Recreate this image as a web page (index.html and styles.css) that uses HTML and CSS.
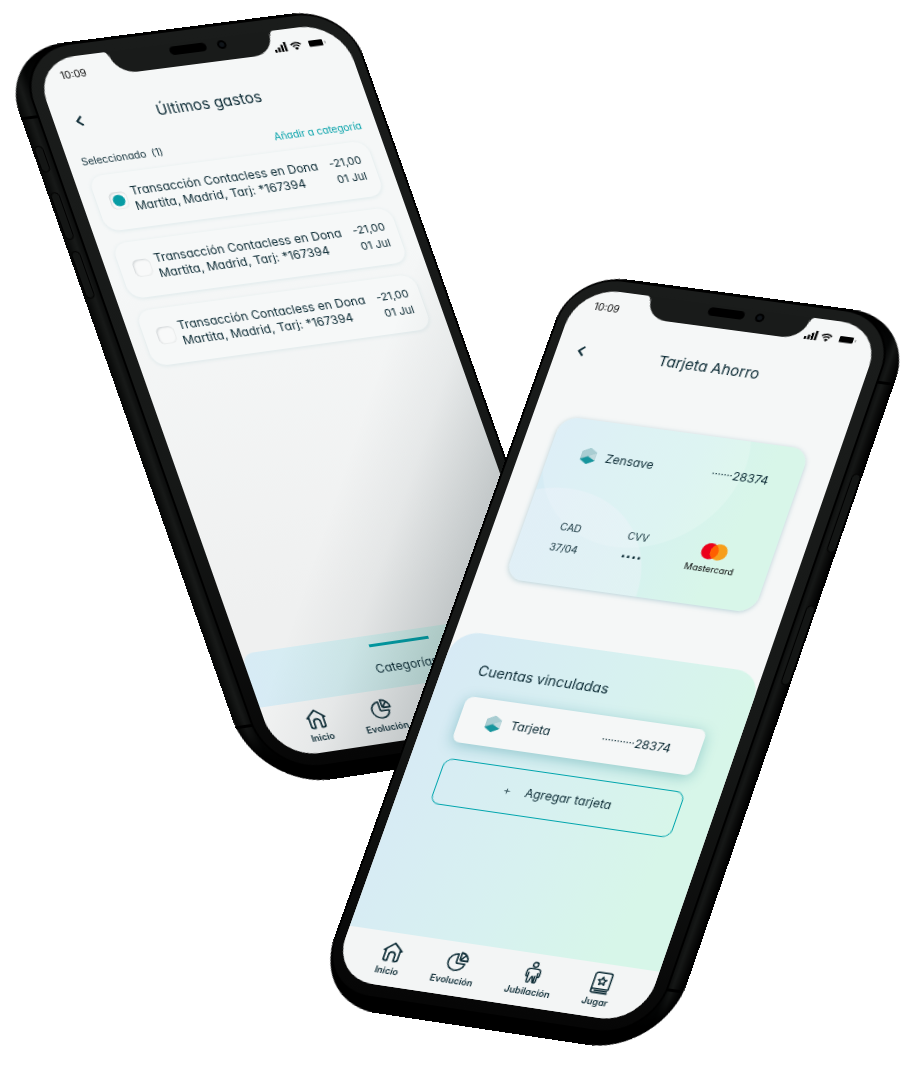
FILE: index.html
```html
<!DOCTYPE html>
<html lang="es">
<head>
<meta charset="utf-8">
<meta name="viewport" content="width=device-width, initial-scale=1">
<title>Zensave</title>
<link rel="stylesheet" href="styles.css">
</head>
<body>
<svg class="sprite" aria-hidden="true">
  <symbol id="i-signal" viewBox="0 0 13 10"><rect x="0" y="7" width="2.2" height="3"/><rect x="3.400" y="5" width="2.2" height="5"/><rect x="6.800" y="2.6" width="2.2" height="7.4"/><rect x="10.200" y="0" width="2.2" height="10"/></symbol>
  <symbol id="i-wifi" viewBox="0 0 12 9"><path d="M.9 3.2a7.4 7.4 0 0 1 10.2 0M2.8 5.3a4.7 4.7 0 0 1 6.4 0" fill="none" stroke="currentColor" stroke-width="1.5"/><path d="M6 9 4 7a2.8 2.8 0 0 1 4 0z"/></symbol>
  <symbol id="i-battery" viewBox="0 0 18 7"><rect width="14" height="6.6" rx="1"/><path d="M16.2 2.2v2.4" stroke="currentColor" stroke-width=".5"/></symbol>
  <symbol id="i-back" viewBox="0 0 10 12"><path d="M7.600 1.200 2.600 6l5 4.800" fill="none" stroke="currentColor" stroke-width="1.900" stroke-linejoin="round"/></symbol>
  <symbol id="i-home" viewBox="0 0 24 24"><path d="M2.500 10.500 12 2.200l9.500 8.300M4.300 9.500V20a2 2 0 0 0 2 2h2.200v-6.300a3.500 3.500 0 0 1 7 0V22h2.200a2 2 0 0 0 2-2V9.500" fill="none" stroke="currentColor" stroke-width="1.800" stroke-linecap="round" stroke-linejoin="round"/></symbol>
  <symbol id="i-pie" viewBox="0 0 24 24"><path d="M11 3.500A9.200 9.200 0 1 0 20.500 14H13a2 2 0 0 1-2-2zM14 1.800V9a1.500 1.500 0 0 0 1.500 1.500h7A9 9 0 0 0 14 1.800zM14.500 10.200 19 4.600" fill="none" stroke="currentColor" stroke-width="1.700" stroke-linejoin="round"/></symbol>
  <symbol id="i-person" viewBox="0 0 24 28"><circle cx="12" cy="4" r="3" fill="none" stroke="currentColor" stroke-width="1.700"/><path d="M8 9h8a4 4 0 0 1 4 4v4.500c0 1.500-2.500 1.500-2.500 0V14M4 13v4.500c0 1.500 2.500 1.500 2.500 0V14M8 9a4 4 0 0 0-4 4M6.500 17v7.500c0 2 3 2 3 0L11 19.500c.3-1.200 1.500-1.200 1.800 0l.7 5c0 2 3.800 2 4 0V17M15 18v7" fill="none" stroke="currentColor" stroke-width="1.700" stroke-linecap="round" stroke-linejoin="round"/></symbol>
  <symbol id="i-book" viewBox="0 0 24 26"><path d="M5.500 1.500h14a2 2 0 0 1 2 2V20H5a2.200 2.200 0 0 0-2.200 2.200V4.200a2.700 2.700 0 0 1 2.700-2.700zM2.800 22.200A2.300 2.300 0 0 0 5 24.500h16.500M6 22.200h15" fill="none" stroke="currentColor" stroke-width="1.700" stroke-linejoin="round"/><path d="m12.200 6.200 1.400 3 3.200.4-2.400 2.200.7 3.200-2.900-1.600-2.900 1.600.7-3.200-2.400-2.200 3.200-.4z" fill="none" stroke="currentColor" stroke-width="1.600" stroke-linejoin="round"/></symbol>
  <symbol id="i-hex" viewBox="0 0 16 16"><path d="M8 0l7 4v8l-7 4-7-4V4z" fill="#6fb3b9"/><path d="M8 0l7 4-14 7V4z" fill="#a9cdd2"/><path d="M15 4v8L8 9V7.500z" fill="#c0d9dd"/><path d="M1 12l7-3.500 7 3.500-7 4z" fill="#16959d"/></symbol>
  <symbol id="i-cards" viewBox="0 0 26 17"><circle cx="8.500" cy="8.500" r="8.500" fill="#eb001b"/><circle cx="17.500" cy="8.500" r="8.500" fill="#f79e1b"/><path d="M13 1.300a8.500 8.500 0 0 1 0 14.400 8.500 8.500 0 0 1 0-14.400z" fill="#ff5f00"/></symbol>
</svg>

<main class="stage">
  <section class="phone phone--left" aria-label="Últimos gastos">
    <div class="phone__body">
      <i class="seam seam--top"></i><i class="key key--mute"></i><i class="key key--up"></i><i class="key key--down"></i><i class="seam seam--bottom"></i>
    </div>
    <div class="phone__face"></div>
    <div class="screen screen--shaded">
      <div class="notch"><i class="notch__speaker"></i><i class="notch__camera"></i></div>
      <div class="status">
        <span>10:09</span>
        <span class="status__icons"><svg class="ic-signal"><use href="#i-signal"/></svg><svg class="ic-wifi"><use href="#i-wifi"/></svg><svg class="ic-battery"><use href="#i-battery"/></svg></span>
      </div>
      <header class="bar">
        <button class="bar__back" type="button" aria-label="Volver"><svg><use href="#i-back"/></svg></button>
        <h1 class="bar__title">Últimos gastos</h1>
      </header>
      <div class="tools">
        <span>Seleccionado &nbsp;(1)</span>
        <a class="tools__link" href="#categoria">Añadir a categoría</a>
      </div>
      <div class="expenses">
        <label class="expense">
          <input class="expense__check" type="checkbox" checked>
          <span class="expense__text">Transacción Contacless en Dona<br>Martita, Madrid, Tarj: *167394</span>
          <span class="expense__sum">-21,00<br>01 Jul</span>
        </label>
        <label class="expense">
          <input class="expense__check" type="checkbox">
          <span class="expense__text">Transacción Contacless en Dona<br>Martita, Madrid, Tarj: *167394</span>
          <span class="expense__sum">-21,00<br>01 Jul</span>
        </label>
        <label class="expense">
          <input class="expense__check" type="checkbox">
          <span class="expense__text">Transacción Contacless en Dona<br>Martita, Madrid, Tarj: *167394</span>
          <span class="expense__sum">-21,00<br>01 Jul</span>
        </label>
      </div>
      <div class="drawer"><i class="drawer__grip"></i><span>Categorías</span></div>
      <nav class="nav">
        <a class="nav__item" href="#inicio"><svg><use href="#i-home"/></svg>Inicio</a>
        <a class="nav__item" href="#evolucion"><svg><use href="#i-pie"/></svg>Evolución</a>
        <a class="nav__item" href="#jubilacion"><svg><use href="#i-person"/></svg>Jubilación</a>
        <a class="nav__item" href="#jugar"><svg><use href="#i-book"/></svg>Jugar</a>
      </nav>
    </div>
  </section>

  <section class="phone phone--right" aria-label="Tarjeta Ahorro">
    <div class="phone__body">
      <i class="seam seam--top"></i><i class="key key--power"></i><i class="key key--side"></i><i class="seam seam--bottom"></i>
    </div>
    <div class="phone__face"></div>
    <div class="screen">
      <div class="notch"><i class="notch__speaker"></i><i class="notch__camera"></i></div>
      <div class="status">
        <span>10:09</span>
        <span class="status__icons"><svg class="ic-signal"><use href="#i-signal"/></svg><svg class="ic-wifi"><use href="#i-wifi"/></svg><svg class="ic-battery"><use href="#i-battery"/></svg></span>
      </div>
      <header class="bar">
        <button class="bar__back" type="button" aria-label="Volver"><svg><use href="#i-back"/></svg></button>
        <h1 class="bar__title">Tarjeta Ahorro</h1>
      </header>
      <div class="card">
        <div class="card__row">
          <svg class="hex"><use href="#i-hex"/></svg>
          <span class="card__name">Zensave</span>
          <span class="digits"><small>·······</small>28374</span>
        </div>
        <div class="card__facts">
          <div class="fact"><span>CAD</span><span>37/04</span></div>
          <div class="fact"><span>CVV</span><b class="fact__dots">····</b></div>
          <div class="brand"><svg><use href="#i-cards"/></svg>Mastercard</div>
        </div>
      </div>
      <div class="panel">
        <h2 class="panel__title">Cuentas vinculadas</h2>
        <div class="account">
          <svg class="hex"><use href="#i-hex"/></svg>
          <span class="card__name">Tarjeta</span>
          <span class="digits"><small>···········</small>28374</span>
        </div>
        <button class="add" type="button"><span class="add__plus">+</span>Agregar tarjeta</button>
      </div>
      <nav class="nav">
        <a class="nav__item" href="#inicio"><svg><use href="#i-home"/></svg>Inicio</a>
        <a class="nav__item" href="#evolucion"><svg><use href="#i-pie"/></svg>Evolución</a>
        <a class="nav__item" href="#jubilacion"><svg><use href="#i-person"/></svg>Jubilación</a>
        <a class="nav__item" href="#jugar"><svg><use href="#i-book"/></svg>Jugar</a>
      </nav>
    </div>
  </section>
</main>
</body>
</html>
```
FILE: styles.css
```css
* { box-sizing: border-box; }

body {
  margin: 0;
  background: #fff;
  color: #0a2933;
  font: 12px/16px Inter, "Open Sans", sans-serif;
  font-feature-settings: "cv11";
}

h1, h2 { margin: 0; font-weight: 400; }
button { padding: 0; border: 0; background: none; color: inherit; font: inherit; font-feature-settings: inherit; }
a { color: inherit; text-decoration: none; }
svg { display: block; fill: currentColor; }
i { display: block; }
.sprite { position: absolute; width: 0; height: 0; }

.stage {
  position: relative;
  min-height: 1069px;
  max-width: 918px;
  margin: 0 auto;
  overflow: hidden;
}

/* Each phone is laid out flat, then tilted as a whole. */
.phone {
  position: absolute;
  top: 0;
  left: 0;
  width: 310px;
  height: 734px;
  transform-origin: 0 0;
}
.phone--left { transform: matrix3d(1.0027, -0.1265, 0, 0.0000298, 0.3325, 0.9455, 0, -0.0000069, 0, 0, 1, 0, 32.5, 61.4, 0, 1); }
.phone--right { transform: matrix3d(0.9612, 0.1235, 0, -0.000022, -0.3484, 0.909, 0, -0.0000336, 0, 0, 1, 0, 578.8, 286.5, 0, 1); }

.phone__body {
  position: absolute;
  inset: -15px -10px -28px -30px;
  border-radius: 66px 56px 66px 76px;
  background: linear-gradient(90deg, #0c0e0d 0, #191b1a 10px, #050606 19px, #000 40px);
  box-shadow: inset 0 -14px 12px #000;
}
.phone--right .phone__body {
  inset: -14px -30px -28px -10px;
  border-radius: 56px 66px 76px 66px;
  background: linear-gradient(270deg, #000 0, #171918 12px, #050606 19px, #000 40px);
}

.phone__face {
  position: absolute;
  inset: -12px -9px -12px -12px;
  border-radius: 54px 50px 52px 54px;
  background: linear-gradient(#1a1c1b, #161817 60%, #060606);
  box-shadow: 0 0 0 2px #000;
}
.phone--right .phone__face { inset: -11px -12px -12px -9px; border-radius: 50px 54px 54px 52px; }

.seam { position: absolute; left: 0; width: 17px; height: 3px; background: #000; }
.seam--top { top: 70px; }
.seam--bottom { bottom: 64px; }
.key { position: absolute; left: 2px; width: 9px; border: 1px solid #000; border-radius: 5px; background: #141615; }
.key--mute { top: 101px; height: 28px; }
.key--up { top: 150px; height: 50px; }
.key--down { top: 212px; height: 50px; }
.phone--right .seam, .phone--right .key { left: auto; right: 1px; }
.key--power { top: 168px; height: 84px; }
.key--side { top: 308px; height: 84px; }

.screen {
  position: relative;
  display: flex;
  flex-direction: column;
  height: 100%;
  overflow: hidden;
  border-radius: 42px;
  background: #f5f7f7;
}
.screen--shaded { background: linear-gradient(#f5f7f7 30%, #eff0f0 80%); }
.screen--shaded::after {
  content: "";
  position: absolute;
  inset: 0;
  pointer-events: none;
  background: linear-gradient(125deg, rgba(20, 40, 45, 0) 58%, rgba(20, 40, 45, .05) 67%, rgba(20, 40, 45, .2) 78%);
}

.notch {
  position: absolute;
  top: -1px;
  left: 75px;
  width: 162px;
  height: 25px;
  border-radius: 0 0 22px 22px;
  background: #191b1a;
}
.notch::before, .notch::after {
  content: "";
  position: absolute;
  top: 0;
  width: 6px;
  height: 6px;
}
.notch::before { right: 100%; background: radial-gradient(circle at 0 100%, transparent 5px, #191b1a 6px); }
.notch::after { left: 100%; background: radial-gradient(circle at 100% 100%, transparent 5px, #191b1a 6px); }
.notch__speaker { position: absolute; top: 4px; left: 60px; width: 37px; height: 9px; border-radius: 5px; background: #000; }
.notch__camera { position: absolute; top: 4px; left: 108px; width: 9px; height: 9px; border: 2px solid #000; border-radius: 50%; background: #10151a; }

.status {
  display: flex;
  justify-content: space-between;
  align-items: center;
  height: 36px;
  padding: 0 20px 0 22px;
  color: #000;
  font-size: 10px;
}
.status__icons { display: flex; align-items: center; }
.ic-signal { width: 13px; height: 10px; }
.ic-wifi { width: 12px; height: 9px; margin: 0 7px 0 3px; }
.ic-battery { width: 18px; height: 7px; }

.bar { position: relative; display: grid; align-items: center; height: 60px; padding: 0 20px; }
.bar > * { grid-area: 1 / 1; }
.bar__back { justify-self: start; z-index: 1; }
.bar__back svg { width: 10px; height: 13px; }
.bar__title { font-size: 15px; line-height: 20px; text-align: center; }

.tools { display: flex; justify-content: space-between; padding: 4px 15px 8px 13px; font-size: 10px; }
.tools__link { color: #00a0a8; }

.expenses { display: grid; gap: 13px; padding: 0 16px 0 14px; }
.expense {
  display: flex;
  align-items: center;
  padding: 11px 11px 13px 13px;
  border-radius: 14px;
  background: #f6f8f8;
  box-shadow: 0 1px 4px rgba(130, 180, 190, .2);
  white-space: nowrap;
}
.expense__check {
  display: grid;
  place-items: center;
  flex: none;
  appearance: none;
  width: 18px;
  height: 18px;
  margin: 0 5px 0 0;
  border-radius: 6px;
  background: #f8f9f9;
  box-shadow: inset 1px 1px 2px rgba(30, 50, 60, .18), inset -1px -1px 1px rgba(30, 50, 60, .05);
}
.expense__check:checked::before { content: ""; width: 12px; height: 12px; border-radius: 50%; background: #079ca4; }
.expense__sum { margin-left: auto; font-size: 11px; line-height: 17px; text-align: right; }

.drawer {
  display: flex;
  flex-direction: column;
  align-items: center;
  gap: 15px;
  height: 56px;
  margin-top: auto;
  padding-top: 9px;
  border-radius: 12px 12px 0 0;
  background: linear-gradient(90deg, #d7ebf5, #d3f0ec 55%, #d6f5e8);
}
.drawer__grip { width: 60px; height: 3px; background: #00a0a8; }

.nav {
  display: flex;
  flex: none;
  justify-content: center;
  gap: 32px;
  height: 54px;
  padding-top: 8px;
  background: #f3f5f5;
  font-size: 9px;
  font-weight: 600;
  line-height: 12px;
}
.screen--shaded .nav { background: #f1f2f2; }
.nav__item { display: grid; justify-items: center; align-content: start; gap: 2px; }
.nav__item svg { width: 22px; height: 23px; }

.card {
  position: relative;
  display: flex;
  flex-direction: column;
  justify-content: space-between;
  height: 174px;
  margin: 40px 29px 59px;
  padding: 29px 30px 30px 31px;
  border-radius: 18px;
  background:
    radial-gradient(circle at 33px 174px, rgba(240, 243, 250, .4) 100px, transparent 101px),
    radial-gradient(circle at 95px 26px, rgba(255, 255, 255, .18) 100px, transparent 101px),
    linear-gradient(100deg, #d6ebf5, #d6f2ef 52%, #d8f6e9 80%);
  box-shadow: 0 1px 5px rgba(90, 150, 165, .4);
}
.card__row, .account { display: flex; align-items: center; }
.hex { width: 17px; height: 17px; margin-right: 9px; }
.digits { display: flex; align-items: center; margin-left: auto; }
.digits small { font: bold 9px/16px "Liberation Sans", sans-serif; }
.card__facts { display: flex; align-items: flex-start; gap: 40px; padding: 0 3px 0 2px; }
.fact { display: grid; justify-items: center; gap: 6px; width: 29px; font-size: 10px; }
.fact__dots { font: bold 16px/16px "Liberation Sans", sans-serif; }
.brand { display: grid; justify-items: center; gap: 2px; margin-left: auto; padding-top: 4px; color: #000; font-size: 9px; }
.brand svg { width: 26px; height: 17px; }

.panel {
  flex: 1;
  padding: 28px 34px 0;
  border-radius: 26px 26px 0 0;
  background: linear-gradient(100deg, #d7eaf5, #d7f1f0 50%, #d7f6e9 85%);
}
.panel__title { margin: 0 0 17px 2px; font-size: 14px; line-height: 20px; }
.account {
  height: 48px;
  padding: 0 29px 0 26px;
  border-radius: 8px;
  background: #f5f7f7;
  box-shadow: 0 3px 14px rgba(20, 130, 140, .35);
}
.add {
  display: flex;
  align-items: center;
  justify-content: center;
  gap: 14px;
  width: 100%;
  height: 48px;
  margin-top: 17px;
  border: 1px solid #00a5ad;
  border-radius: 9px;
}
.add__plus { font-weight: 300; }
```
